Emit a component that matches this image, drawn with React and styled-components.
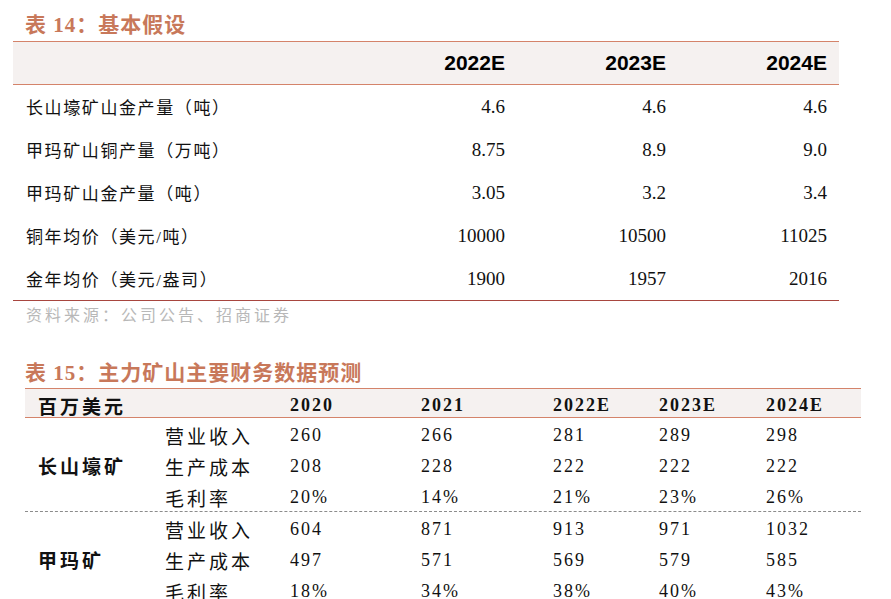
import styled, { createGlobalStyle } from "styled-components";

const GlobalStyle = createGlobalStyle`
    html, body {
        margin: 0;
        padding: 0;
        background: #ffffff;
    }
    body {
        font-family: "Liberation Serif", "Noto Sans CJK SC", serif;
        color: #111111;
    }
`;

const CJK = `"Liberation Serif", "Noto Sans CJK SC", serif`;

const assumptions = [
    { label: "长山壕矿山金产量（吨）", values: ["4.6", "4.6", "4.6"] },
    { label: "甲玛矿山铜产量（万吨）", values: ["8.75", "8.9", "9.0"] },
    { label: "甲玛矿山金产量（吨）", values: ["3.05", "3.2", "3.4"] },
    { label: "铜年均价（美元/吨）", values: ["10000", "10500", "11025"] },
    { label: "金年均价（美元/盎司）", values: ["1900", "1957", "2016"] },
];

const mines = [
    {
        name: "长山壕矿",
        rows: [
            { label: "营业收入", values: ["260", "266", "281", "289", "298"] },
            { label: "生产成本", values: ["208", "228", "222", "222", "222"] },
            { label: "毛利率", values: ["20%", "14%", "21%", "23%", "26%"] },
        ],
    },
    {
        name: "甲玛矿",
        rows: [
            { label: "营业收入", values: ["604", "871", "913", "971", "1032"] },
            { label: "生产成本", values: ["497", "571", "569", "579", "585"] },
            { label: "毛利率", values: ["18%", "34%", "38%", "40%", "43%"] },
        ],
    },
];

const years = ["2020", "2021", "2022E", "2023E", "2024E"];

export default function App() {
    return (
        <Page>
            <GlobalStyle />
            <Title>表 14：基本假设</Title>
            <Table1>
                <Head1>
                    <span />
                    <HeadCell1>2022E</HeadCell1>
                    <HeadCell1>2023E</HeadCell1>
                    <HeadCell1>2024E</HeadCell1>
                </Head1>
                {assumptions.map((row) => (
                    <Row1 key={row.label}>
                        <Label1>{row.label}</Label1>
                        {row.values.map((v, i) => (
                            <Num1 key={i}>{v}</Num1>
                        ))}
                    </Row1>
                ))}
            </Table1>
            <Source>资料来源：公司公告、招商证券</Source>

            <Title second>表 15：主力矿山主要财务数据预测</Title>
            <Table2>
                <Head2>
                    <HeadLabel2>百万美元</HeadLabel2>
                    <span />
                    {years.map((y) => (
                        <HeadCell2 key={y}>{y}</HeadCell2>
                    ))}
                </Head2>
                {mines.map((mine, idx) => (
                    <Group key={mine.name} divided={idx < mines.length - 1}>
                        <GroupName>{mine.name}</GroupName>
                        {mine.rows.map((row) => (
                            <RowCells key={row.label}>
                                <SubLabel>{row.label}</SubLabel>
                                {row.values.map((v, i) => (
                                    <Num2 key={i}>{v}</Num2>
                                ))}
                            </RowCells>
                        ))}
                    </Group>
                ))}
            </Table2>
        </Page>
    );
}

const Page = styled.div`
    width: 891px;
    padding-top: 11px;
    box-sizing: border-box;
`;

const Title = styled.h2`
    margin: ${(props) => (props.second ? "31px 0 1px 25px" : "0 0 2px 25px")};
    font-family: ${CJK};
    font-size: 21px;
    line-height: 28px;
    font-weight: bold;
    letter-spacing: 1px;
    color: #c8785a;
`;

const Table1 = styled.div`
    margin-left: 13px;
    width: 826px;
    border-bottom: 1px solid #a8463f;
`;

const cols1 = `
    display: grid;
    grid-template-columns: 318px 161px 161px 161px;
    padding: 0 12px 0 13px;
    align-items: center;
`;

const Head1 = styled.div`
    ${cols1}
    height: 42px;
    background: #f5f1f0;
    border-top: 1px solid #d4836a;
    border-bottom: 1px solid #d4836a;
`;

const HeadCell1 = styled.div`
    text-align: right;
    font-family: "Liberation Sans", Arial, sans-serif;
    font-weight: bold;
    font-size: 21px;
    color: #000000;
`;

const Row1 = styled.div`
    ${cols1}
    height: 43px;
`;

const Label1 = styled.div`
    font-family: ${CJK};
    font-size: 17px;
    letter-spacing: 1.6px;
    color: #111111;
`;

const Num1 = styled.div`
    text-align: right;
    font-family: "Liberation Serif", serif;
    font-size: 19px;
    color: #111111;
`;

const Source = styled.div`
    margin: 3px 0 0 26px;
    font-family: ${CJK};
    font-size: 16px;
    line-height: 24px;
    letter-spacing: 3px;
    color: #b8b8b8;
`;

const Table2 = styled.div`
    margin-left: 25px;
    width: 836px;
`;

const cols2 = `
    display: grid;
    grid-template-columns: 127px 125px 131px 132px 106px 107px 95px;
    padding-left: 13px;
    box-sizing: border-box;
    align-items: center;
`;

const Head2 = styled.div`
    ${cols2}
    height: 30px;
    padding-top: 3px;
    box-sizing: border-box;
    background: #f5f1f0;
    border-top: 1px solid #d4836a;
    border-bottom: 1px solid #d4836a;
`;

const HeadLabel2 = styled.div`
    font-family: ${CJK};
    font-weight: bold;
    font-size: 19px;
    letter-spacing: 3px;
    color: #111111;
`;

const HeadCell2 = styled.div`
    font-family: "Liberation Serif", serif;
    font-weight: bold;
    font-size: 18px;
    letter-spacing: 2px;
    color: #111111;
`;

const Group = styled.div`
    ${cols2}
    grid-template-rows: repeat(3, 31px);
    border-bottom: ${(props) => (props.divided ? "1px dashed #8c8c8c" : "none")};
`;

const RowCells = styled.div`
    display: contents;
`;

const GroupName = styled.div`
    grid-column: 1;
    grid-row: 1 / span 3;
    padding-top: 2px;
    font-family: ${CJK};
    font-weight: bold;
    font-size: 19px;
    letter-spacing: 3px;
    color: #111111;
`;

const SubLabel = styled.div`
    grid-column: 2;
    padding-top: 3px;
    font-family: ${CJK};
    font-size: 19px;
    letter-spacing: 3px;
    color: #111111;
`;

const Num2 = styled.div`
    padding-top: 3px;
    font-family: "Liberation Serif", serif;
    font-size: 18px;
    letter-spacing: 2px;
    color: #111111;
`;
